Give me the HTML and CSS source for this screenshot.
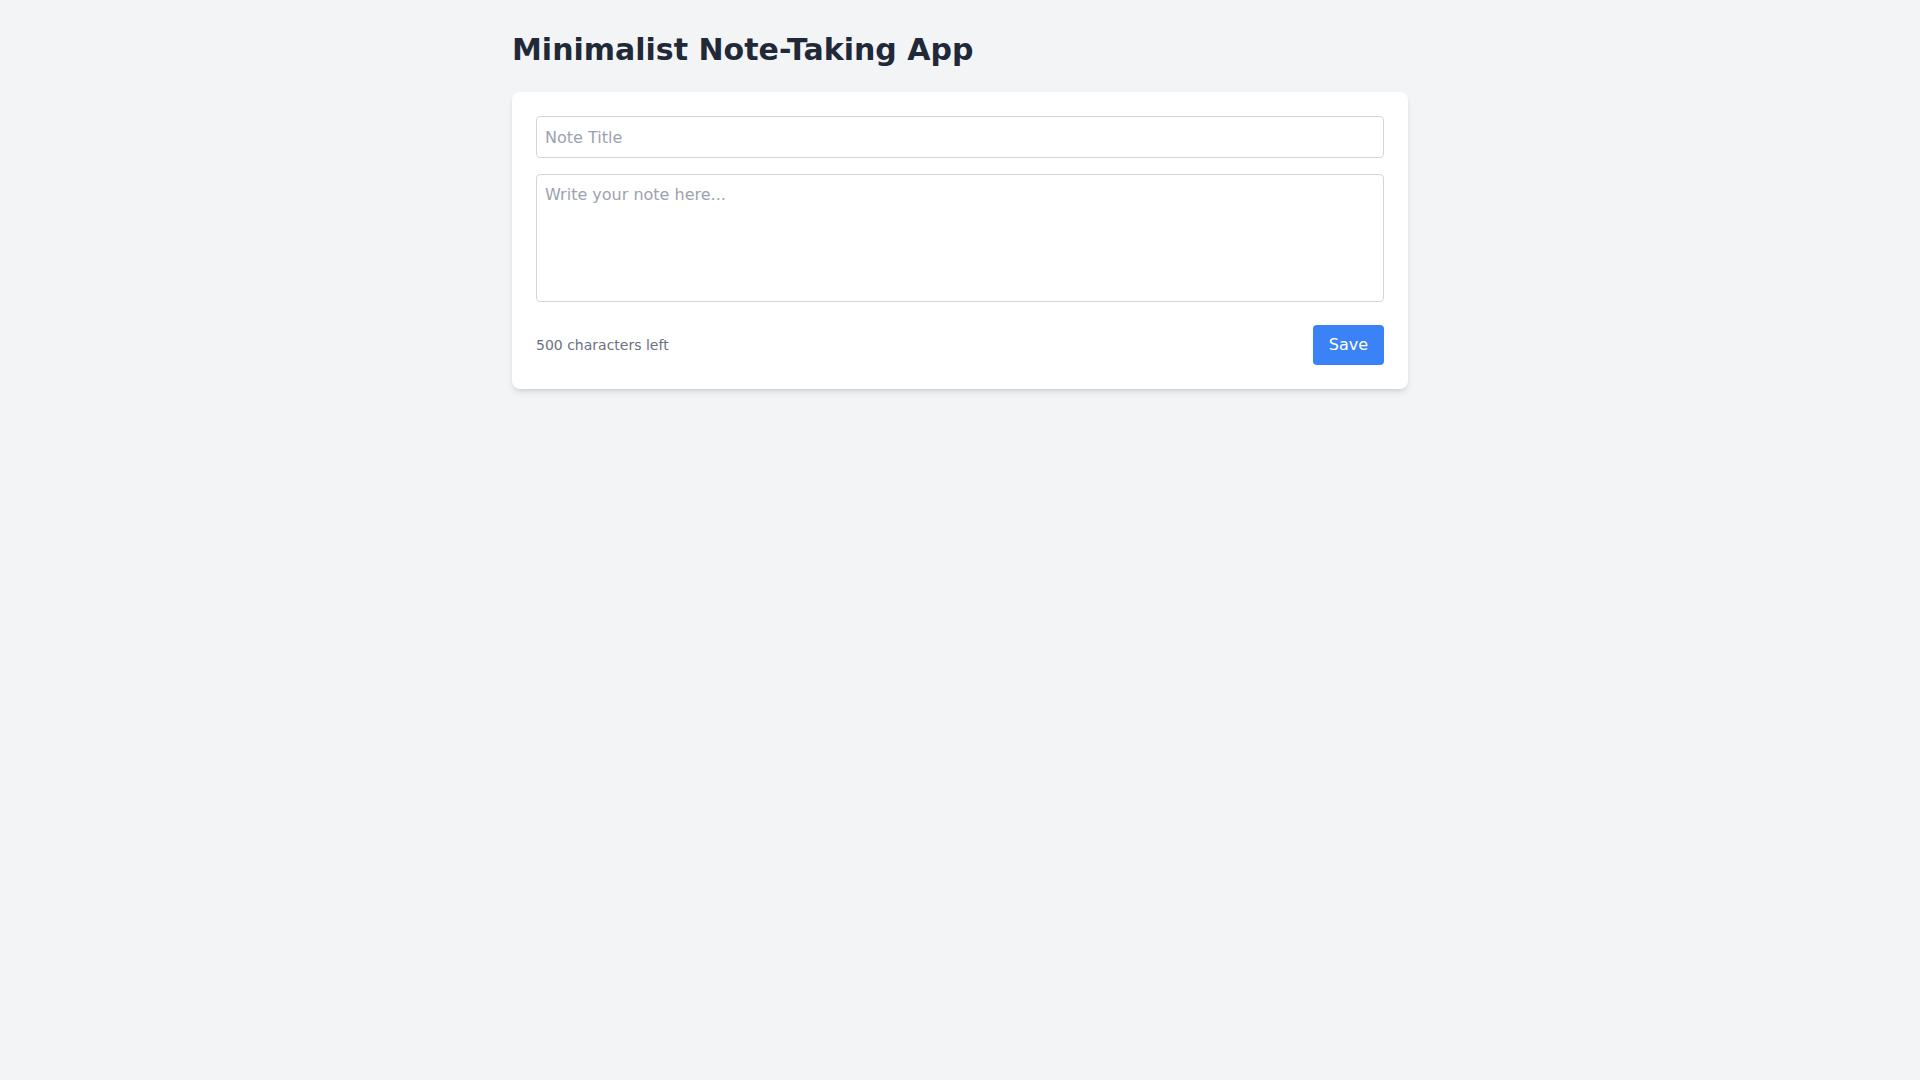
FILE: index.html
```html
<!DOCTYPE html>
<html lang="en">
<head>
<meta charset="utf-8">
<title>Minimalist Note-Taking App</title>
<link rel="stylesheet" href="styles.css">
</head>
<body>
<main class="container">
  <h1 class="title">Minimalist Note-Taking App</h1>
  <section class="card">
    <input class="field title-input" type="text" placeholder="Note Title">
    <textarea class="field note-input" placeholder="Write your note here..."></textarea>
    <div class="footer">
      <span class="counter">500 characters left</span>
      <button class="save-btn" type="button">Save</button>
    </div>
  </section>
</main>
</body>
</html>
```

FILE: styles.css
```css
* { box-sizing: border-box; }
html, body { margin: 0; padding: 0; }
body {
  background: #f3f4f6;
  font-family: "DejaVu Sans", sans-serif;
  color: #1f2937;
  min-height: 100vh;
}
.container {
  max-width: 896px;
  margin: 0 auto;
  padding: 32px 0;
}
.title {
  margin: 0 0 24px 0;
  font-size: 30px;
  line-height: 36px;
  font-weight: 700;
  color: #1f2937;
}
.card {
  background: #ffffff;
  border-radius: 8px;
  box-shadow: 0 4px 6px -1px rgba(0,0,0,0.1), 0 2px 4px -2px rgba(0,0,0,0.1);
  padding: 24px;
  display: flex;
  flex-direction: column;
}
.field {
  display: block;
  width: 100%;
  border: 1px solid #d1d5db;
  border-radius: 4px;
  padding: 8px;
  font-family: "DejaVu Sans", sans-serif;
  font-size: 16px;
  line-height: 24px;
  color: #1f2937;
  background: #fff;
  outline: none;
  margin: 0;
}
.field::placeholder { color: #9ca3af; opacity: 1; }
.title-input { height: 42px; margin-bottom: 16px; }
.note-input { height: 128px; resize: none; }
.footer {
  margin-top: 23px;
  display: flex;
  justify-content: space-between;
  align-items: center;
}
.counter {
  font-size: 14px;
  line-height: 20px;
  color: #6b7280;
}
.save-btn {
  background: #3b82f6;
  color: #ffffff;
  border: none;
  border-radius: 4px;
  padding: 8px 16px;
  font-family: "DejaVu Sans", sans-serif;
  font-size: 16px;
  line-height: 24px;
  cursor: pointer;
}
```
